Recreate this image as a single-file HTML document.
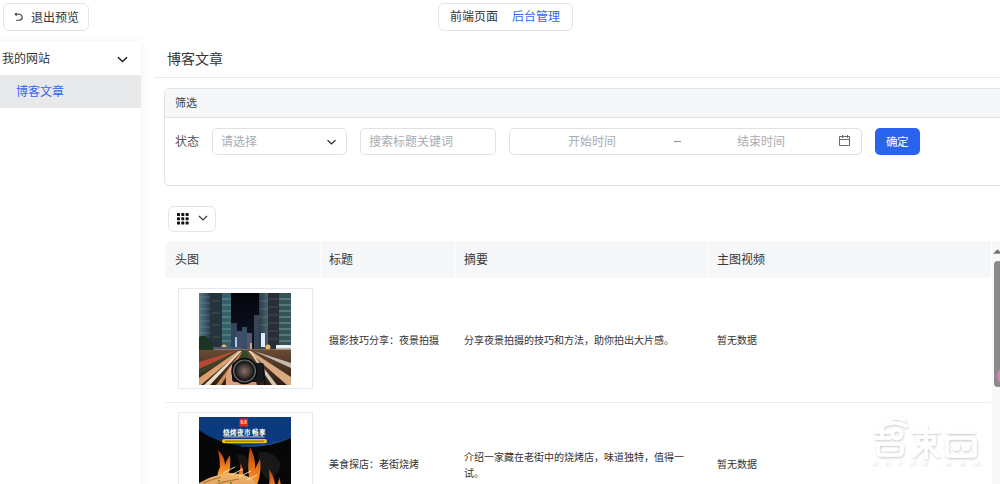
<!DOCTYPE html>
<html lang="zh-CN"><head><meta charset="utf-8">
<style>
*{box-sizing:border-box;margin:0;padding:0}
html,body{width:1000px;height:484px;overflow:hidden;background:#fff;font-family:"Liberation Sans",sans-serif;color:#333}
.abs{position:absolute}
.btn-exit{left:3px;top:3px;width:86px;height:28px;border:1px solid #e3e5e8;border-radius:6px;background:#fff}
.tabs{left:438px;top:3px;width:135px;height:28px;border:1px solid #e3e5e8;border-radius:6px;background:#fff}
.t{position:absolute;white-space:nowrap;line-height:1}
.side{left:0;top:41px;width:141px;height:460px;background:#fff;box-shadow:0 0 7px rgba(0,0,0,.07)}
.sel{left:0;top:75px;width:141px;height:33px;background:#e8e9eb}
.hline{left:154px;top:77px;width:846px;height:1px;background:#e6e8eb}
.card{left:164px;top:88px;width:900px;height:98px;border:1px solid #e1e3e6;border-radius:5px;background:#fff;overflow:hidden}
.cardh{left:0;top:0;width:100%;height:29px;background:#f6f7f9;border-bottom:1px solid #e1e3e6}
.inp{border:1px solid #dfe1e5;border-radius:5px;background:#fff}
.ok{left:875px;top:128px;width:45px;height:27px;background:#2a64ee;border-radius:5px}
.gbtn{left:168px;top:206px;width:48px;height:26px;border:1px solid #e3e5e8;border-radius:6px}
.th{left:165px;top:241px;width:826px;height:37px;background:#f6f7f9;border-radius:6px 0 0 0}
.sep{top:241px;width:1px;height:37px;background:#fdfdfe}
.rowline{left:165px;width:826px;height:1px;background:#ebedf0}
.imgbox{left:178px;width:135px;height:101px;border:1px solid #e6e8eb;background:#fff}
.track{left:992px;top:241px;width:8px;height:243px;background:#f8f8f8}
</style></head>
<body>
<!-- top bar -->
<div class="abs btn-exit"></div>
<svg class="abs" style="left:13px;top:12px" width="10" height="11" viewBox="0 0 10 11"><path d="M3.6 1 L2.2 2.3 L3.6 3.6 M2.4 2.3 H6.2 A2.95 2.95 0 0 1 6.2 8.2 H3.2" fill="none" stroke="#3a3a3a" stroke-width="1.1"/></svg>
<div class="t" style="left:31px;top:12px;font-size:12px;color:#333">退出预览</div>
<div class="abs tabs"></div>
<div class="t" style="left:450px;top:11px;font-size:12px;color:#333">前端页面</div>
<div class="t" style="left:512px;top:11px;font-size:12px;color:#3366ee">后台管理</div>

<!-- sidebar -->
<div class="abs side"></div>
<div class="abs sel"></div>
<div class="t" style="left:2px;top:53px;font-size:12px;color:#333">我的网站</div>
<svg class="abs" style="left:117px;top:55px" width="11" height="8" viewBox="0 0 11 8"><path d="M1 2.2 L5.5 6.6 L10 2.2" fill="none" stroke="#1a1c22" stroke-width="1.4"/></svg>
<div class="t" style="left:16px;top:86px;font-size:12px;color:#3366ee">博客文章</div>

<!-- heading -->
<div class="t" style="left:167px;top:52px;font-size:14px;color:#333">博客文章</div>
<div class="abs hline"></div>

<!-- filter card -->
<div class="abs card"><div class="abs cardh"></div></div>
<div class="t" style="left:175px;top:98px;font-size:11px;color:#444">筛选</div>
<div class="t" style="left:175px;top:136px;font-size:12px;color:#555">状态</div>
<div class="abs inp" style="left:212px;top:128px;width:135px;height:27px"></div>
<div class="t" style="left:221px;top:136px;font-size:12px;color:#a8abb2">请选择</div>
<svg class="abs" style="left:327px;top:139px" width="9" height="7" viewBox="0 0 9 7"><path d="M0.5 1.1 L4.5 4.9 L8.5 1.1" fill="none" stroke="#25272d" stroke-width="1.3"/></svg>
<div class="abs inp" style="left:360px;top:128px;width:136px;height:27px"></div>
<div class="t" style="left:369px;top:136px;font-size:12px;color:#a8abb2">搜索标题关键词</div>
<div class="abs inp" style="left:509px;top:128px;width:353px;height:27px"></div>
<div class="t" style="left:568px;top:136px;font-size:12px;color:#a8abb2">开始时间</div>
<div class="abs" style="left:673.5px;top:141px;width:7px;height:1px;background:#8c8f98"></div>
<div class="t" style="left:737px;top:136px;font-size:12px;color:#a8abb2">结束时间</div>
<svg class="abs" style="left:839px;top:134px" width="12" height="13" viewBox="0 0 12 13"><path d="M0.5 2.5 H10.5 V11.5 H0.5 Z M0.5 5.5 H10.5 M3.5 1 V4 M8.5 1 V4" fill="none" stroke="#6a6a6a" stroke-width="1"/></svg>
<div class="abs ok"></div>
<div class="t" style="left:886px;top:137px;font-size:11.5px;color:#fff">确定</div>

<!-- grid btn -->
<div class="abs gbtn"></div>
<svg class="abs" style="left:176px;top:212px" width="14" height="14" viewBox="0 0 14 14" fill="#111">
<rect x="1" y="1" width="3" height="3" rx=".6"/><rect x="5.3" y="1" width="3" height="3" rx=".6"/><rect x="9.6" y="1" width="3" height="3" rx=".6"/>
<rect x="1" y="5.3" width="3" height="3" rx=".6"/><rect x="5.3" y="5.3" width="3" height="3" rx=".6"/><rect x="9.6" y="5.3" width="3" height="3" rx=".6"/>
<rect x="1" y="9.6" width="3" height="3" rx=".6"/><rect x="5.3" y="9.6" width="3" height="3" rx=".6"/><rect x="9.6" y="9.6" width="3" height="3" rx=".6"/>
</svg>
<svg class="abs" style="left:198px;top:215px" width="10" height="7" viewBox="0 0 10 7"><path d="M1 1 L5 5 L9 1" fill="none" stroke="#333" stroke-width="1.1"/></svg>

<!-- table -->
<div class="abs th"></div>
<div class="abs sep" style="left:320px"></div>
<div class="abs sep" style="left:455px"></div>
<div class="abs sep" style="left:708px"></div>
<div class="t" style="left:175px;top:254px;font-size:12px;color:#363636">头图</div>
<div class="t" style="left:329px;top:254px;font-size:12px;color:#363636">标题</div>
<div class="t" style="left:464px;top:254px;font-size:12px;color:#363636">摘要</div>
<div class="t" style="left:717px;top:254px;font-size:12px;color:#363636">主图视频</div>

<!-- row1 -->
<div class="abs imgbox" style="top:288px"></div>
<div class="abs" style="left:199px;top:293px;width:92px;height:92px;overflow:hidden"><svg width="92" height="92" viewBox="0 0 92 92">
<defs>
<linearGradient id="sky" x1="0" y1="0" x2="0" y2="1"><stop offset="0" stop-color="#04060c"/><stop offset="1" stop-color="#1a2036"/></linearGradient>
<linearGradient id="bl" x1="0" y1="0" x2="1" y2="0"><stop offset="0" stop-color="#5a7a8c"/><stop offset="1" stop-color="#2a3c4c"/></linearGradient>
<linearGradient id="br" x1="0" y1="0" x2="1" y2="0"><stop offset="0" stop-color="#2a3a46"/><stop offset="1" stop-color="#4a6470"/></linearGradient>
<radialGradient id="lens" cx=".5" cy=".5" r=".5"><stop offset="0" stop-color="#8a7060"/><stop offset=".45" stop-color="#4a3e3a"/><stop offset=".75" stop-color="#151518"/><stop offset=".88" stop-color="#6a6a70"/><stop offset="1" stop-color="#101012"/></radialGradient>
<linearGradient id="roadg" x1="0" y1="0" x2="0" y2="1"><stop offset="0" stop-color="#6a4a34"/><stop offset="1" stop-color="#2e1e16"/></linearGradient>
</defs>
<rect width="92" height="92" fill="url(#sky)"/>
<rect x="32" y="30" width="6" height="26" fill="#34445c"/>
<rect x="38" y="38" width="5" height="18" fill="#444a68"/>
<rect x="43" y="34" width="5" height="22" fill="#36506a"/>
<rect x="48" y="40" width="5" height="16" fill="#4e5874"/>
<rect x="36" y="44" width="2" height="10" fill="#9fd0e8"/>
<rect x="51" y="50" width="2" height="6" fill="#e0a080"/>
<rect x="0" y="0" width="11" height="50" fill="url(#bl)"/>
<rect x="11" y="0" width="12" height="54" fill="#26323c"/>
<rect x="23" y="0" width="9" height="56" fill="#35606a"/>
<path d="M0 4 H11 M0 10 H11 M0 16 H11 M0 22 H11 M0 28 H11 M0 34 H11 M0 40 H11" stroke="#8ab0b8" stroke-width=".6" opacity=".5"/>
<path d="M23 6 H32 M23 12 H32 M23 18 H32 M23 24 H32 M23 30 H32 M23 36 H32 M23 42 H32 M23 48 H32" stroke="#a8d8c8" stroke-width=".7" opacity=".6"/>
<path d="M13 8 H21 M13 20 H21 M13 32 H21 M13 44 H21" stroke="#c8a870" stroke-width=".5" opacity=".5"/>
<rect x="55" y="22" width="6" height="34" fill="#364656"/>
<rect x="60" y="0" width="9" height="56" fill="url(#br)"/>
<rect x="69" y="0" width="11" height="56" fill="#262e38"/>
<rect x="80" y="0" width="12" height="54" fill="#34545a"/>
<path d="M80 6 H92 M80 12 H92 M80 18 H92 M80 24 H92 M80 30 H92 M80 36 H92 M80 42 H92 M80 48 H92" stroke="#b0e0c0" stroke-width=".8" opacity=".65"/>
<path d="M60 8 H69 M60 16 H69 M60 24 H69 M60 32 H69" stroke="#90b8c0" stroke-width=".5" opacity=".5"/>
<path d="M70 6 H79 M70 14 H79 M70 22 H79 M70 30 H79 M70 38 H79 M70 46 H79" stroke="#c0a878" stroke-width=".5" opacity=".5"/>
<rect x="62" y="40" width="4" height="14" fill="#dfefff"/>
<rect x="77" y="52" width="15" height="16" fill="#b8b4a8"/>
<rect x="77" y="52" width="15" height="3" fill="#e8f0f8"/>
<rect x="80" y="58" width="10" height="8" fill="#d8a070"/>
<circle cx="25" cy="54" r="2.5" fill="#ffc070" opacity=".9"/>
<circle cx="69" cy="54" r="2.5" fill="#ffc070" opacity=".9"/>
<rect x="12" y="54" width="30" height="4" fill="#485872"/><rect x="0" y="56" width="92" height="3" fill="#a08068" opacity=".8"/>
<path d="M0 44 Q6 40 12 48 Q16 56 14 64 L0 68 Z" fill="#1c3424"/>
<rect x="0" y="57" width="92" height="35" fill="url(#roadg)"/>
<path d="M0 69 L36 58 L39 58 L0 76 Z" fill="#c04a3a" opacity=".9"/>
<path d="M0 78 L37 58 L39 58 L0 81 Z" fill="#2e4a26"/>
<path d="M0 85 L39 58 L42 58 L2 92 L0 92 Z" fill="#d8a070"/>
<path d="M5 92 L41 58 L42.5 58 L11 92 Z" fill="#fff2dc" opacity=".9"/>
<path d="M17 92 L43 58 L44 58 L22 92 Z" fill="#e0a060" opacity=".85"/>
<path d="M49 58 L52 58 L92 84 L92 92 L88 92 Z" fill="#d8aa80"/>
<path d="M50 58 L51.5 58 L78 92 L73 92 Z" fill="#fff0d8" opacity=".8"/>
<path d="M55 58 L92 70 L92 75 Z" fill="#d8d0c8" opacity=".85"/>
<path d="M43 58 L48 58 L50 66 L41 66 Z" fill="#34482a"/>
<path d="M27 92 Q26 80 31 74 L40 72 L42 92 Z" fill="#dca080"/>
<path d="M42 92 L58 92 L56 86 L46 84 Z" fill="#d49878"/>
<path d="M34 70 L40 66 L52 66 L54 70 L63 70 Q65 70 65 73 L65 86 Q65 89 62 89 L36 89 Q33 89 33 86 L33 73 Q33 70 34 70 Z" fill="#17191d"/>
<path d="M64.5 74 L66 92" stroke="#0e0e0e" stroke-width="1.6"/>
<circle cx="45.5" cy="78" r="12.5" fill="url(#lens)"/>
<circle cx="45.5" cy="78" r="12.5" fill="none" stroke="#0a0a0a" stroke-width="1.5"/>
</svg>

</div>
<div class="t" style="left:329px;top:336px;font-size:10px;color:#333">摄影技巧分享：夜景拍摄</div>
<div class="t" style="left:464px;top:336px;font-size:10px;color:#333">分享夜景拍摄的技巧和方法，助你拍出大片感。</div>
<div class="t" style="left:717px;top:336px;font-size:10px;color:#333">暂无数据</div>
<div class="abs rowline" style="top:402px"></div>

<!-- row2 -->
<div class="abs imgbox" style="top:412px"></div>
<div class="abs" style="left:199px;top:417px;width:92px;height:92px;overflow:hidden"><svg width="92" height="92" viewBox="0 0 92 92">
<defs>
<linearGradient id="fl2" x1="0" y1="1" x2="0" y2="0"><stop offset="0" stop-color="#ffcf70"/><stop offset=".5" stop-color="#f58a22"/><stop offset="1" stop-color="#b83a08"/></linearGradient>
<linearGradient id="meat2" x1="0" y1="0" x2="0" y2="1"><stop offset="0" stop-color="#f0b870"/><stop offset="1" stop-color="#c87a38"/></linearGradient>
</defs>
<rect width="92" height="92" fill="#070707"/>
<!-- smoke -->
<path d="M60 36 Q72 32 82 46 Q80 60 68 62 Q58 52 60 36 Z" fill="#262626" opacity=".55"/>
<path d="M38 38 Q46 34 50 46 Q48 56 42 54 Z" fill="#1c1c1c" opacity=".7"/>
<!-- blue header -->
<path d="M0 0 H92 V20 Q72 30 52 29.5 Q20 28 0 13 Z" fill="#0c3a7e"/>
<path d="M42 29.6 Q72 30 92 20.5" fill="none" stroke="#5a8ad0" stroke-width=".6" opacity=".7"/>
<rect x="40.5" y="1.5" width="8.5" height="8" fill="#e0281e"/>
<text x="44.75" y="7" font-size="4.5" fill="#ffe0d0" text-anchor="middle" font-family="Liberation Sans" font-weight="bold">6.6</text>
<text x="45.5" y="17.6" font-size="6.6" fill="#fff" text-anchor="middle" font-weight="bold" letter-spacing=".2">烧烤夜市畅享</text>
<rect x="25" y="19.2" width="40.5" height="1.3" fill="#a8b8e0" opacity=".8"/>
<rect x="23" y="22" width="45" height="4.3" rx="2.1" fill="#f2c418"/>
<rect x="26" y="23.5" width="39" height="1.4" fill="#5a4410" opacity=".55"/>
<!-- flames -->
<path d="M18 70 Q17 58 21 50 Q21 42 19 33 Q26 40 26 48 Q28 42 31 38 Q32 48 30 56 Q33 62 32 70 Z" fill="url(#fl2)"/>
<path d="M39 70 Q38 62 40 56 Q42 50 41 46 Q45 52 44 58 Q46 64 45 70 Z" fill="url(#fl2)"/>
<path d="M47 92 Q45 74 50 60 Q48 46 51 30 Q57 42 56 52 Q59 46 61 42 Q63 58 57 70 Q61 80 60 92 Z" fill="url(#fl2)"/>
<path d="M66 92 Q66 78 70 70 Q71 60 70 52 Q77 62 76 72 Q80 66 80 60 Q84 72 81 82 L82 92 Z" fill="url(#fl2)"/>
<path d="M82 92 Q82 84 86 78 Q88 86 88 92 Z" fill="url(#fl2)"/>
<!-- meat skewers -->
<path d="M0 66 Q14 58 30 56 Q44 56 54 62 Q60 70 58 92 L0 92 Z" fill="url(#meat2)"/>
<path d="M24 56 L36 50 M32 58 L44 52 M40 60 L52 54 M48 63 L58 58" stroke="#f8e8c8" stroke-width=".9"/>
<path d="M4 66 Q14 62 22 60 M10 70 Q24 64 40 62" stroke="#b06a30" stroke-width="1" fill="none"/>
<circle cx="20" cy="64" r=".9" fill="#3a8a30"/><circle cx="10" cy="68" r=".9" fill="#3a8a30"/><circle cx="32" cy="66" r=".9" fill="#3a8a30"/>
</svg>

</div>
<div class="t" style="left:329px;top:460px;font-size:10px;color:#333">美食探店：老街烧烤</div>
<div class="t" style="left:464px;top:450px;font-size:10px;color:#333;line-height:15.5px;white-space:normal;width:240px">介绍一家藏在老街中的烧烤店，味道独特，值得一<br>试。</div>
<div class="t" style="left:717px;top:460px;font-size:10px;color:#333">暂无数据</div>

<!-- scrollbar -->
<div class="abs track"></div>
<svg class="abs" style="left:993px;top:249px" width="7" height="5" viewBox="0 0 7 5"><path d="M0 4.8 L4.5 0.3 L9 4.8 Z" fill="#747474"/></svg>
<div class="abs" style="left:994px;top:261px;width:8px;height:126px;background:#8a8a8a;border-radius:4px"></div>

<!-- pink blob -->
<div class="abs" style="left:997px;top:367px;width:16px;height:18px;border-radius:50%;background:#d08ab4"></div>
<!-- watermark -->
<svg class="abs" style="left:868px;top:414px" width="116" height="54" viewBox="0 0 116 54">
<defs><filter id="wm" x="-10%" y="-10%" width="120%" height="130%"><feDropShadow dx="0.6" dy="1.2" stdDeviation="0.9" flood-color="#000" flood-opacity="0.22"/></filter></defs>
<g filter="url(#wm)" fill="none" stroke="#fff" stroke-width="3.4" stroke-linecap="round" stroke-linejoin="round">
<path d="M21 6 Q28 2 36 6"/>
<path d="M17 11 Q28 6 38 12"/>
<path d="M7 18 H22 M8 24 H22 M14 14 V22"/>
<circle cx="29" cy="20" r="4.5"/>
<rect x="10" y="30" width="24" height="11" rx="3"/>
<path d="M16 35.5 H28"/>
<path d="M45 18 H70 M50 23 H66 V30 H50 Z M58 13 V44 M56 32 L46 42 M60 32 L70 42"/>
<path d="M80 18 H106 M84 24 H102 Q107 24 107 29 V39 Q107 42 104 42 H82 Q79 42 79 39 V28 Q79 24 84 24 Z"/>
<circle cx="88" cy="33" r="2.2"/><circle cx="98" cy="33" r="2.2"/>
</g>
<g filter="url(#wm)" fill="#fff" font-family="Liberation Sans" font-size="7" font-weight="bold" font-style="italic"><text x="5" y="50.5" letter-spacing="9">zhidx.com</text></g>
</svg>
</body></html>
